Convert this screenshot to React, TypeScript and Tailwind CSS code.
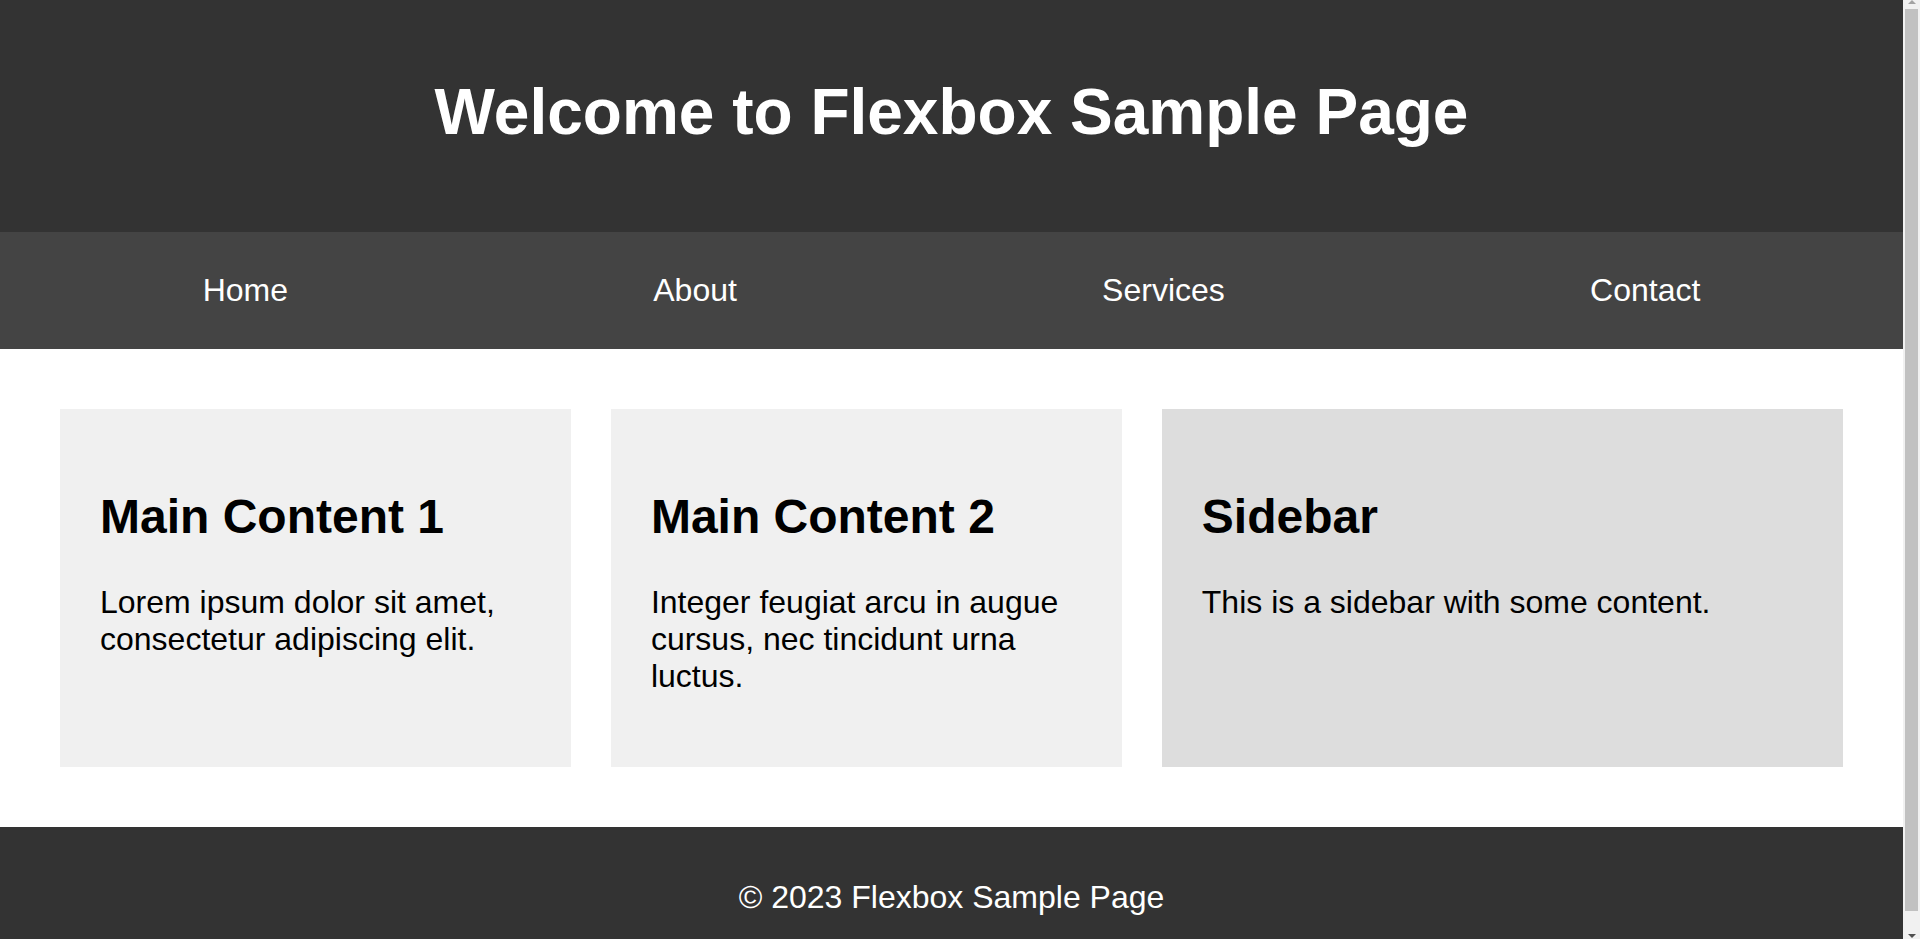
import React from "react";

const navLinks = ["Home", "About", "Services", "Contact"];

const cards = [
  {
    title: "Main Content 1",
    body: "Lorem ipsum dolor sit amet, consectetur adipiscing elit.",
    bg: "bg-[#f0f0f0]",
  },
  {
    title: "Main Content 2",
    body: "Integer feugiat arcu in augue cursus, nec tincidunt urna luctus.",
    bg: "bg-[#f0f0f0]",
  },
  {
    title: "Sidebar",
    body: "This is a sidebar with some content.",
    bg: "bg-[#dddddd]",
  },
];

// the classic browser scrollbar seen at the right edge of the screenshot
function ScrollTrack() {
  return (
    <div className="sticky top-0 flex h-screen w-[17px] shrink-0 flex-col bg-[#f1f1f1]">
      <div className="flex h-[9px] justify-center">
        <span className="h-0 w-0 border-x-[4px] border-b-[4px] border-x-transparent border-b-[#a3a3a3]" />
      </div>
      <div className="mx-[2px] h-[902px] bg-[#c1c1c1]" />
      <div className="flex flex-1 items-end justify-center pb-[1px]">
        <span className="h-0 w-0 border-x-[4px] border-t-[4px] border-x-transparent border-t-[#505050]" />
      </div>
    </div>
  );
}

export default function App() {
  return (
    <div className="flex items-start bg-white font-['Liberation_Sans',Arial,sans-serif] text-[32px] leading-[normal] text-black">
      <div className="min-w-0 flex-1">
        <header className="bg-[#333333] pt-[75px] pb-[83px] text-center text-white">
          <h1 className="text-[64px] font-bold leading-[normal]">
            Welcome to Flexbox Sample Page
          </h1>
        </header>

        <nav className="flex justify-around bg-[#444444] px-5 py-10">
          {navLinks.map((link) => (
            <a key={link} href="#" className="text-white no-underline">
              {link}
            </a>
          ))}
        </nav>

        <main className="grid grid-cols-[3fr_3fr_4fr] gap-10 p-[60px]">
          {cards.map((card) => (
            <section key={card.title} className={`${card.bg} min-w-0 p-10`}>
              <h2 className="my-[0.83em] text-[48px] font-bold leading-[normal]">
                {card.title}
              </h2>
              <p className="my-[1em]">{card.body}</p>
            </section>
          ))}
        </main>

        <footer className="bg-[#333333] p-5 text-center text-white">
          <p className="my-[1em]">© 2023 Flexbox Sample Page</p>
        </footer>
      </div>
      <ScrollTrack />
    </div>
  );
}
